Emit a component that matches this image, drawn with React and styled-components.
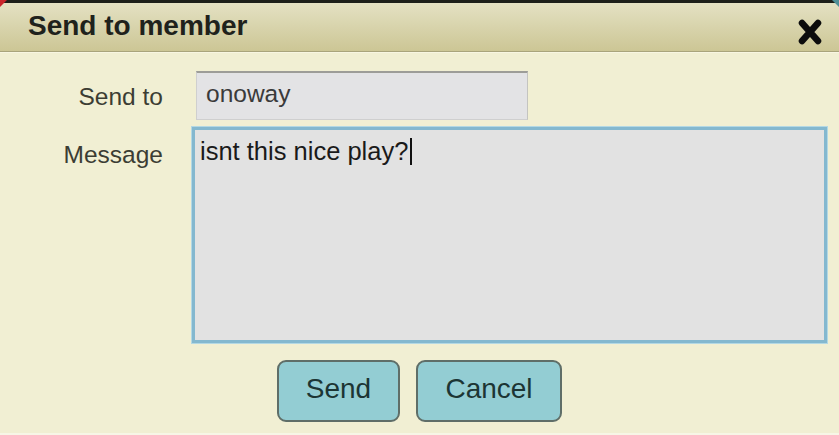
import React from 'react';
import styled, { createGlobalStyle } from 'styled-components';

const GlobalStyle = createGlobalStyle`
  html, body {
    margin: 0;
    padding: 0;
    background: #f1efd3;
  }
  * {
    box-sizing: border-box;
  }
`;

const Dialog = styled.div`
  position: relative;
  width: 839px;
  height: 435px;
  display: flex;
  flex-direction: column;
  background: #f1efd3;
  font-family: "Liberation Sans", Arial, sans-serif;
  overflow: hidden;
  border-bottom: 2px solid #f7f6e6;
`;

const Corner = styled.div`
  position: absolute;
  top: 0;
  ${({ side }) => (side === 'left' ? 'left: 0;' : 'right: 0;')}
  width: 0;
  height: 0;
  border-top: 7px solid ${({ color }) => color};
  ${({ side }) =>
    side === 'left'
      ? 'border-right: 7px solid transparent;'
      : 'border-left: 7px solid transparent;'}
`;

const Header = styled.div`
  height: 52px;
  flex: none;
  display: flex;
  align-items: center;
  justify-content: space-between;
  padding: 0 16px 0 28px;
  border-top: 3px solid #1d1f1a;
  border-bottom: 1px solid #a9a47c;
  background: linear-gradient(to bottom, #e4e1c3 0%, #d9d5ae 45%, #ccc695 100%);
  box-shadow: 0 1px 0 #f8f6e2;
`;

const Title = styled.h1`
  margin: 0 0 2px;
  font-size: 28px;
  font-weight: 700;
  color: #1f221c;
`;

const CloseButton = styled.button`
  border: none;
  background: none;
  padding: 0;
  width: 26px;
  height: 28px;
  display: flex;
  align-items: center;
  justify-content: center;
  margin-top: 10px;
  cursor: pointer;
`;

const Body = styled.div`
  flex: 1;
  display: flex;
  flex-direction: column;
  padding: 19px 12px 0 0;
`;

const Form = styled.div`
  display: grid;
  grid-template-columns: 163px 1fr;
  column-gap: 29px;
  row-gap: 7px;
`;

const Label = styled.label`
  font-size: 24.5px;
  color: #3c3d33;
  text-align: right;
  align-self: ${({ top }) => (top ? 'start' : 'center')};
  padding-top: ${({ top }) => (top ? '14px' : '2px')};
`;

const TextInput = styled.input`
  margin-left: 4px;
  width: 332px;
  height: 49px;
  padding: 0 0 4px 9px;
  font-family: "Liberation Sans", Arial, sans-serif;
  font-size: 24.5px;
  color: #3a3a3a;
  background: #e3e3e5;
  border: 1px solid #cfcfcf;
  border-top: 2px solid #9d9d98;
  border-right-color: #c4c4c0;
  outline: none;
`;

const MessageBox = styled.div`
  height: 216px;
  padding: 7px 5px;
  font-size: 25.5px;
  color: #1a1a1a;
  background: #e2e2e2;
  border: 3px solid #84b8cf;
  box-shadow: 0 0 0 1px #b3d8e4;
`;

const Caret = styled.span`
  display: inline-block;
  width: 2px;
  height: 27px;
  margin-left: 2px;
  vertical-align: -5px;
  background: #111;
`;

const Actions = styled.div`
  display: flex;
  justify-content: center;
  gap: 16px;
  margin-top: 17px;
  padding-left: 12px;
`;

const Button = styled.button`
  width: ${({ wide }) => (wide ? '146px' : '123px')};
  height: 62px;
  border: 2px solid #5f6e68;
  border-radius: 9px;
  background: #93cdd3;
  font-family: "Liberation Sans", Arial, sans-serif;
  font-size: 28px;
  color: #1c3534;
  padding: 0 0 4px;
  cursor: pointer;
`;

const CloseIcon = () => (
  <svg width="24" height="26" viewBox="0 0 24 26">
    <path
      d="M4 4 L20 22 M20 4 L4 22"
      stroke="#0c0c0c"
      strokeWidth="6.5"
      strokeLinecap="round"
    />
  </svg>
);

const App = () => {
  return (
    <>
      <GlobalStyle />
      <Dialog>
        <Corner side="left" color="#c8242a" />
        <Corner side="right" color="#4f8f97" />
        <Header>
          <Title>Send to member</Title>
          <CloseButton aria-label="Close">
            <CloseIcon />
          </CloseButton>
        </Header>
        <Body>
          <Form>
            <Label>Send to</Label>
            <TextInput value="onoway" readOnly />
            <Label top>Message</Label>
            <MessageBox>
              isnt this nice play?<Caret />
            </MessageBox>
          </Form>
          <Actions>
            <Button>Send</Button>
            <Button wide>Cancel</Button>
          </Actions>
        </Body>
      </Dialog>
    </>
  );
};

export default App;
